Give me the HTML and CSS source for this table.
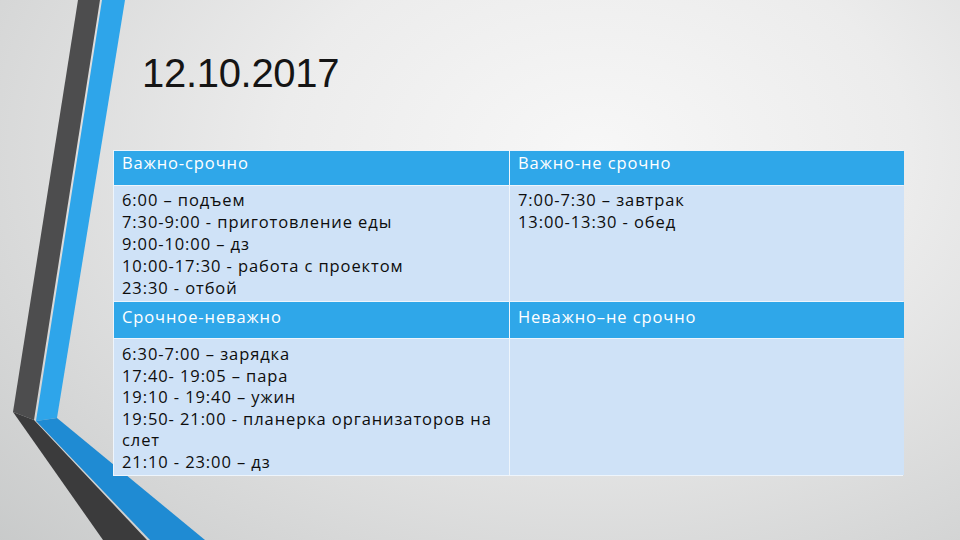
FILE: index.html
```html
<!DOCTYPE html>
<html lang="ru">
<head>
<meta charset="utf-8">
<title>12.10.2017</title>
<link rel="stylesheet" href="styles.css">
</head>
<body>
<div class="slide">
  <svg class="deco" width="960" height="540" viewBox="0 0 960 540">
    <polygon points="78,0 100,0 34,420 13,412" fill="#4d4d4e"/>
    <polygon points="13,412 34,420 147,540 103,540" fill="#3b3b3c"/>
    <polygon points="102,0 125,0 57,418 36,421" fill="#2ea5ea"/>
    <polygon points="36,421 57,418 205,540 150,540" fill="#1f8bd3"/>
  </svg>
  <h1 class="title">12.10.2017</h1>
  <div class="matrix">
    <div class="cell head h1">Важно-срочно</div>
    <div class="cell head h1">Важно-не срочно</div>
    <div class="cell body b1">6:00 – подъем<br>7:30-9:00 - приготовление еды<br>9:00-10:00 – дз<br>10:00-17:30 - работа с проектом<br>23:30 - отбой</div>
    <div class="cell body b1">7:00-7:30 – завтрак<br>13:00-13:30 - обед</div>
    <div class="cell head h2">Срочное-неважно</div>
    <div class="cell head h2">Неважно–не срочно</div>
    <div class="cell body b2">6:30-7:00 – зарядка<br>17:40- 19:05 – пара<br>19:10 - 19:40 – ужин<br>19:50- 21:00 - планерка организаторов на слет<br>21:10 - 23:00 – дз</div>
    <div class="cell body b2"></div>
  </div>
</div>
</body>
</html>
```

FILE: styles.css
```css
html, body {
  margin: 0;
  padding: 0;
}
.slide {
  position: relative;
  width: 960px;
  height: 540px;
  overflow: hidden;
  background: radial-gradient(ellipse 900px 620px at 62% 28%, #f7f7f7 0%, #ececec 35%, #d6d7d7 70%, #c3c5c5 100%);
  padding: 49px 0 0 113px;
  box-sizing: border-box;
}
.deco {
  position: absolute;
  left: 0;
  top: 0;
}
.title {
  position: relative;
  margin: 0 0 53px 29px;
  font-family: "Liberation Sans", Arial, sans-serif;
  font-weight: normal;
  font-size: 40px;
  line-height: 48px;
  color: #151515;
  letter-spacing: -0.3px;
}
.matrix {
  position: relative;
  width: 790px;
  display: grid;
  grid-template-columns: 395px 394px;
  grid-template-rows: 34px 115px 36px 136px;
  gap: 1px;
  padding: 1px;
  box-sizing: border-box;
  background: #eef5fc;
  font-family: "Open Sans", "DejaVu Sans", sans-serif;
  font-size: 16.5px;
  letter-spacing: 0.9px;
}
.cell {
  padding: 0 8px;
  box-sizing: border-box;
}
.head {
  background: #2fa7e9;
  color: #ffffff;
  line-height: 24px;
}
.h1 { padding-top: 0; }
.h2 { padding-top: 3px; }
.body {
  background: #cfe2f7;
  color: #0d0d0d;
  line-height: 22px;
}
.b1 { padding-top: 3px; }
.b2 { padding-top: 4px; line-height: 21.5px; }
```
